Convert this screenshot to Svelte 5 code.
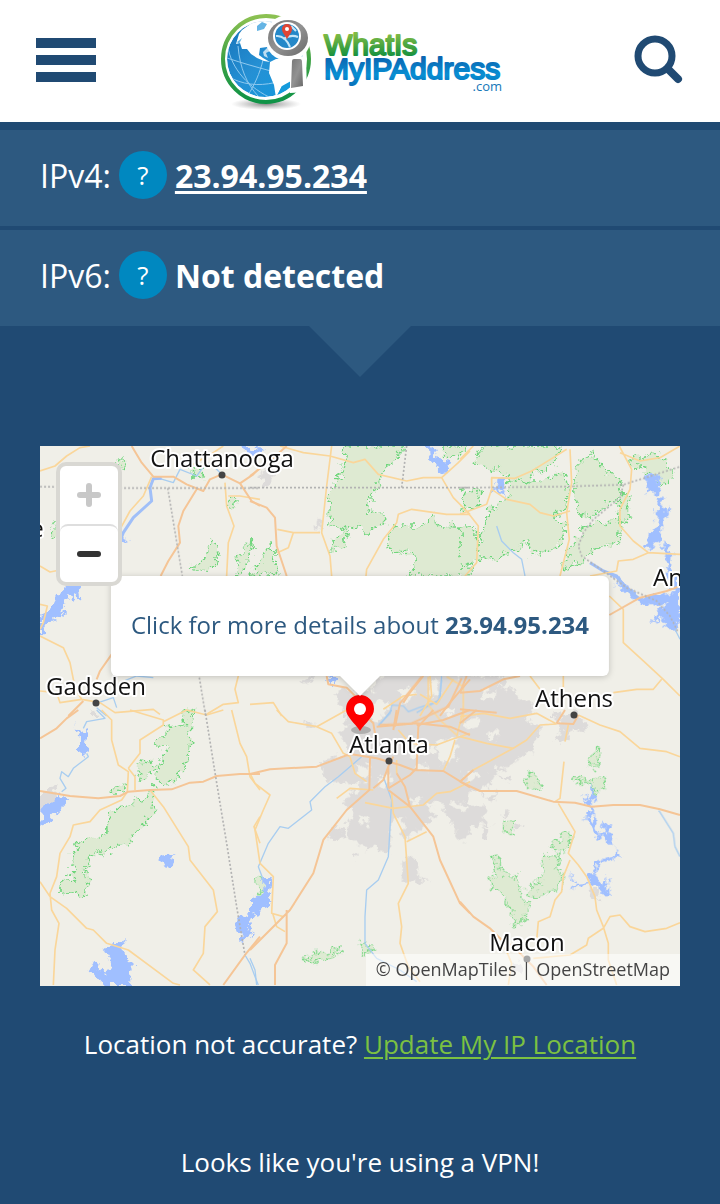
<script>
  // Each tile is drawn in its own units, three to a map pixel.
  const tiles = [
    {
      x: 0, y: 0,
      urban: 'M150 800l20-5 10 15h-30z',
      parks: 'M232 45l20-10 8 30-20 10z M455 60l35 0-5 35-25 5z M560 160l25-10 5 35-25 5z M515 280L535 300 530 345 500 375 460 375 458 355 490 345Z M628 285L640 310 610 370 583 390 600 330Z M50 225l8 0 0 60-20-20z M435 795l25-5 0 20h-25z',
      lakes: 'M98 408L142 408 120 425 124 470 105 440 85 465 60 500 88 490 50 520 20 535 0 568 0 515 30 490 50 450Z M238 272l30 10-22 8-10 8z M610 5l50 5 0 15-40 5z',
      rivers: 'M545 85L520 60 500 50 470 90 420 70 400 110 350 95 M215 745L240 710 290 690 340 695 M175 770l45-15 10 30 M170 785l30 25',
      streams: 'M365 97L340 98 330 125 335 165 280 215 250 260 238 290',
      major: 'M275 0L305 50 340 92 400 92 440 115 490 135 510 100 545 85 600 112 640 85 660 65 M470 130L430 195 415 240 420 290 385 345 362 390 M600 112L635 165 660 180 M215 625L180 675 170 700 M130 765L85 810',
      minor: 'M0 75L45 60 80 30 120 5 150 0 M335 92L310 150 270 195 240 250 M0 360L30 378 60 372 M0 475L22 480 10 530 0 550 M0 570L70 605 90 650 105 725 125 760 60 770 50 740 0 735 M555 110L560 180 582 240 565 290 560 390 M565 150L600 150 660 160 M595 690L585 730 595 770 550 775 500 805 M125 760L180 770 225 800 340 790 360 805 M450 60l70-40 30-20',
      borders: 'M0 122L240 126H660 M383 126L427 390 M478 695L497 810'
    },
    {
      x: 210, y: 0,
      urban: 'M30 85l30-30 10 35-15 35-15-5z M200 225h15v30h-15z M150 700l40-8-20 25z',
      parks: 'M290 0L465 0 440 40 400 70 385 120 360 150 355 195 402 200 400 240 365 245 355 270 330 235 295 250 285 300 245 318 250 280 285 250 240 230 235 140 275 90Z M430 240L520 240 550 210 565 235 620 240 660 270 660 390 470 390 500 350 480 320 425 320 410 295Z M60 300L78 320 80 385 5 390 30 340Z M0 290l10 5-5 30h-5z M640 140l20 0v40h-20z M580 0l70 0-25 35-40-5z',
      lakes: 'M530 0L555 10 560 35 605 45 590 80 560 70 535 40Z M232 690h22l5 20-18 5z M0 5l45 5-30 15H0z',
      rivers: 'M575 690l-5 70-70 40',
      streams: '',
      major: 'M0 165L50 185 75 215 80 300 110 390 M0 90L60 45 M60 45l50-45 M230 690L235 715 290 725 320 755 M660 700L600 770 570 810 M520 690L480 740 460 770',
      minor: 'M90 0L160 20 240 30 310 50 345 40 385 85 470 105 520 95 575 95 625 50 660 15 M245 0L230 120 215 260 240 330 245 390 M82 250L130 260 210 260 M130 260L115 305 82 320 M575 95L610 155 660 205 M660 205L590 205 485 190 445 205 440 230 400 280 350 370 348 390 M0 775L70 770 95 810 M540 690l5 60-35 60 M510 745L560 775 610 700 M400 790L460 750 500 745',
      borders: 'M0 125H660 M470 0L455 125'
    },
    {
      x: 420, y: 0,
      urban: 'M270 800l40-5v15h-40z',
      parks: 'M60 0L300 0 280 55 215 85 200 115 150 95 120 75 45 55Z M340 60L400 20 420 55 480 110 490 140 430 190 400 210 350 200 345 140Z M510 40L600 20 645 95 600 120 555 70 515 60Z M150 105L240 105 300 80 325 100 322 190 280 205 315 240 300 300 215 325 200 290 110 340 60 330 60 270 90 190 140 160Z M10 140l50-5-5 45-45 10z M375 240L480 220 475 290 410 310 360 350 310 370 325 320Z M480 140l30 10-10 90-25-30z M0 240L45 240 55 340 0 370Z',
      lakes: 'M110 100L145 95 135 120 120 130 135 160 115 145 100 130Z M555 85L600 90 590 140 560 140Z M595 150L612 155 605 190 635 185 610 230 600 280 570 310 550 300 575 265 590 220Z M605 285L635 300 630 360 660 400 660 520 645 555 610 535 600 515 575 535 595 495 625 470 560 475 520 460 480 430 450 375 480 395 510 425 540 455 590 445 640 440 615 370 620 315Z',
      rivers: 'M110 240L125 285 160 320 185 340 195 390 M645 550l15 30',
      streams: 'M390 350L430 375 470 390 500 430 540 460',
      major: 'M448 507L540 455 620 435 660 420 M0 740L60 735 130 700 180 690 M0 790l110 10 M20 690L0 740',
      minor: 'M40 0L0 40 M320 10L215 75 165 97 95 95 95 130 140 160 210 175 240 200 280 210 330 195 M330 10L335 110 320 200 328 280 300 390 M478 0L515 70 510 130 480 190 480 240 520 285 565 320 660 325 M480 20L540 45 600 35 660 0 M565 320L520 340 475 345 470 375 390 390 M95 130L80 175 0 205 M20 195L55 240 50 350 15 390 M448 450L490 490 490 590 550 645 610 700 660 750 M605 700L580 730 530 730 460 740 M210 690L240 730 M310 690v40',
      borders: 'M0 125L300 122 490 116 660 62 M490 116L480 155 400 220 370 260 355 300 365 330 430 375 500 425 590 465 630 510 655 560'
    },
    {
      x: 0, y: 264,
      urban: 'M0 245L50 225 45 250 60 275 30 300 0 295Z',
      parks: 'M430 0L460 10 455 40 450 130 432 185 375 230 345 215 360 150 350 180 310 205 290 200 300 150 365 170 380 110 345 105 380 60 430 45Z M212 235l45-15-5 25-35 8z M340 245L340 310 265 395 190 430 150 440 135 480 145 510 130 555 60 550 60 510 105 500 95 430 110 400 200 370 205 310 290 275Z',
      lakes: 'M100 42l20 25 25-10-5 75-20-5 0-40z M55 245L88 272 55 300 35 320 15 350 0 345 5 290 40 280Z M358 440l45-4-10 38-25-5z M660 555L660 595 630 635 615 695 600 685 585 620 620 620Z M225 700L255 690 240 710 270 740 275 780 270 825 190 825 165 790 145 780 160 755 195 795 215 770 200 720Z',
      rivers: 'M170 0L195 25 140 35 130 55 M140 130L145 140 100 175 85 200 65 185 60 205 78 235 65 245 M615 735L630 760 645 800 655 825',
      streams: '',
      major: 'M0 85L50 55 80 25 115 0 M0 243L90 258 175 265 240 258 265 245 330 240 395 238 450 218 490 215 530 198 600 192 660 192 M660 680L615 735 550 825',
      minor: 'M185 0L215 30 215 90 235 165 265 185 262 245 M265 175L285 200 285 240 M265 175L300 130 300 90 370 45 370 30 270 0 M370 35L440 0 500 15 550 0 M262 245L245 270 180 300 150 335 100 345 90 380 60 430 50 500 30 550 35 600 57 640 45 720 40 825 M0 515L30 560 80 595 140 655 160 660 200 700 265 720 400 820 420 825 M330 240L370 290 445 410 450 450 520 540 532 605 495 650 490 730 460 780 510 825 M575 0L600 100 620 140 630 200 660 240 M660 320L642 350 660 400',
      borders: 'M495 0L527 200 560 400 590 590 615 735'
    },
    {
      x: 210, y: 264,
      urban: 'M235 365L270 355 290 385 240 390Z M300 435l25-5-10 18z M460 445L500 450 505 500 535 518 455 515Z M160 35l30 0 10 15-35 0z',
      parks: 'M20 510l30-5-5 40-15 0z M165 755L190 730 230 725 265 710 268 730 220 750Z M332 700l20-5 18 28-35 10z',
      lakes: 'M40 495L65 510 60 540 45 570 75 575 40 590 25 610 0 615 0 570 40 545Z M0 660l5 10-5 10z',
      rivers: 'M425 0L385 50 M335 140L265 200 225 230 180 275 185 300 115 355 90 350 55 400 25 470 40 510 M400 200L425 270 415 440 385 510 350 540 345 620 345 700 380 745 450 780 500 815 M0 745L15 780 20 825',
      streams: '',
      major: 'M0 192L60 178 200 170 300 132 380 145 450 165 490 180 580 183 660 232 M440 0L430 60 M360 145L358 240 290 300 220 390 190 490 120 600 0 720 M110 600L110 700 75 765 75 825 M415 235L415 170 430 140 M415 235L480 195 500 175 505 50 550 0 M415 240L480 290 550 380 570 450 630 580 660 610 M380 50L500 40 600 50 660 75 M480 290L465 230 440 190 M660 0L580 30 500 45 M330 0L370 40 380 100 M370 235L400 210 415 170',
      minor: 'M80 0L115 35 200 50 245 70 280 130 300 140 315 190 350 215 M200 50L290 0 M0 190L15 220 60 255 40 300 15 360 30 460 70 500 65 610 100 620 M68 610L80 650 105 665 M260 265L300 235 370 240 M345 278L430 295 520 285 560 250 600 245 660 215 M425 250L430 310 465 380 475 520 445 580 455 650 450 700 475 770 510 815 M470 395L530 365 M445 60L480 100 560 105 600 90 660 70 M640 0L620 80 M615 90L600 140 580 183 M440 150V190',
      borders: ''
    },
    {
      x: 420, y: 264,
      urban: 'M290 20L340 0 385 45 370 65 340 55 320 100 280 95 305 60Z M110 200l50 0 0 22z M120 318l30-18-10 20z M160 350l25-15 5 10-25 15z M70 345l20 15-10 35-12-5z M385 535l30 10 5 35-30-20z M160 765l25-10v25l-20 5z',
      parks: 'M410 115l12 5-10 50-25 0z M210 190l30 25-5 20-38-10z M340 200L395 212 435 200 440 225 400 248 380 215 345 220Z M135 328l20 5 0 42-20 0z M325 368l12 10-15 40-30 10-22-20z M255 435L305 440 285 475 305 485 300 540 245 555 205 555 205 530 240 520Z M92 440L120 455 130 495 180 500 185 570 205 580 190 640 165 645 150 600 130 555 92 525 105 480Z',
      lakes: 'M385 220L395 245 408 245 398 275 400 330 420 375 435 375 425 330 450 345 445 375 467 385 460 415 440 390 405 380 385 325 365 320 388 318 388 288 365 255 390 275Z M465 415L475 430 490 433 470 440 430 460 412 470 410 500 430 530 440 500 450 550 420 545 390 520 345 535 335 540 345 525 322 488 350 520 385 515 385 490 405 490 405 460 465 435Z',
      rivers: 'M597 302L640 370 645 410 660 440',
      streams: '',
      major: 'M0 215L60 243 170 243 280 275 345 278 395 290 460 285 540 285 600 298 660 315 M0 575L40 620 90 655 125 690 160 710 220 770 260 825 M0 40L50 0 M0 215L40 180 M290 40L340 42 355 15 M290 40L315 0 M130 690L160 710',
      minor: 'M0 20L70 10 150 25 230 10 290 42 M290 42L240 45 200 90 160 115 80 100 0 80 M160 115L40 180 0 215 M325 45L315 95 M312 155L300 265 285 275 M295 280L345 365 325 430 355 465 380 500 405 560 410 600 430 650 445 700 445 750 470 825 M330 450L310 500 305 545 285 570 270 620 235 635 230 690 M355 15L420 45 480 65 540 115 620 125 660 140 M430 655L450 620 480 615 510 650 555 665 620 655 660 638 M430 655L385 685 380 705 330 735 220 745 M130 700l25 60-10 65',
      borders: ''
    },
    {
      // The Atlanta metro area, with its open ground cut out
      x: 280, y: 224,
      urban: 'M180 20L220 10 330 10 560 20 540 50 580 60 600 90 640 110 620 150 660 175 640 240 590 270 570 290 520 300 525 330 500 345 440 370 440 400 500 405 490 440 515 470 480 460 440 490 425 515 410 505 400 460 380 440 365 400 325 405 345 440 310 470 255 515 245 450 215 440 210 540 185 555 165 525 140 550 130 520 85 510 80 460 100 430 70 400 80 380 120 355 110 340 30 335 10 320 10 270 60 260 90 245 65 200 80 130 40 75 70 50 100 70 160 60Z M350 218L412 202 402 260 370 292 355 255Z M268 222l30 0 50 8-5 20-60 10z M110 290l40-5 0 40-20 12z M180 310l35 0-5 34-35 8z M440 150l45-5 0 20-45 10z M230 60l45-15 15 30-40 25z M430 315l45-15 15 15-50 20z M140 90l50 0 15 30-35 40-25-20z M490 60l40 10-5 20-35-5z M330 40l25-5 5 40-30 5z M505 185l25 0 0 18-25 0z M290 285l35 0-5 20-30-4z M270 380l35 5-5 18-25 0z M360 120l40-5 0 18-35 5z M120 440l30 5-5 18-25-4z M390 400l30-10 20 30-25 10z M25 480l30-8 25 30-35 10z M490 380l45-18-15 32z',
      parks: '', lakes: '', rivers: 'M175 165L210 130 215 105 250 108 265 125 300 112 355 95 365 30',
      streams: '',
      major: 'M225 170L240 100 305 20 M425 25L385 110 275 160 180 165',
      minor: 'M325 20L325 105 360 150 410 195 M380 20L430 50 430 160',
      borders: ''
    }
  ];

  const layers = ['urban', 'parks', 'lakes', 'rivers', 'streams', 'minor', 'major', 'borders'];

  const cities = [
    { name: 'Chattanooga', x: 182, y: 21, dot: 29 },
    { name: 'Gadsden', x: 56, y: 249, dot: 257 },
    { name: 'Athens', x: 534, y: 261, dot: 269 },
    { name: 'Atlanta', x: 349, y: 307, dot: 315 },
    { name: 'Macon', x: 487, y: 505, dot: 513 },
    { name: 'An', x: 628, y: 140 },
    { name: 'e', x: -3, y: 91 }
  ];

  const ip = '23.94.95.234';
</script>

<header>
  <button class="menu" aria-label="Menu"><span></span><span></span><span></span></button>
  <a class="logo" href="#home" aria-label="WhatIsMyIPAddress.com">
    <svg width="292" height="104" viewBox="218 6 292 104">
      <defs>
        <linearGradient id="ring" x2="0" y2="1"><stop offset="0" stop-color="#8cc152" /><stop offset=".5" stop-color="#3fa244" /><stop offset="1" stop-color="#0f9347" /></linearGradient>
        <linearGradient id="sea" x2="1" y2="1"><stop offset="0" stop-color="#1672b8" /><stop offset=".5" stop-color="#2590d4" /><stop offset="1" stop-color="#109be0" /></linearGradient>
        <linearGradient id="steel" x2="1" y2="1"><stop offset="0" stop-color="#777" /><stop offset=".5" stop-color="#929292" /><stop offset="1" stop-color="#686868" /></linearGradient>
        <linearGradient id="green" gradientUnits="userSpaceOnUse" x1="0" x2="0" y1="32" y2="54"><stop offset="0" stop-color="#80bb45" /><stop offset="1" stop-color="#16913f" /></linearGradient>
        <linearGradient id="blue" gradientUnits="userSpaceOnUse" x1="0" x2="0" y1="56" y2="84"><stop offset="0" stop-color="#0b66b2" /><stop offset=".6" stop-color="#088fd3" /><stop offset="1" stop-color="#0870b9" /></linearGradient>
        <radialGradient id="shade"><stop offset="0" stop-color="#555" stop-opacity=".7" /><stop offset="1" stop-color="#888" stop-opacity="0" /></radialGradient>
        <clipPath id="globe"><circle cx="264" cy="57" r="38" /></clipPath>
      </defs>
      <ellipse cx="265" cy="102" rx="35" ry="6" fill="url(#shade)" />
      <circle cx="265" cy="57" r="43" fill="#fff" stroke="url(#ring)" stroke-width="4" />
      <g clip-path="url(#globe)">
        <circle cx="264" cy="57" r="38" fill="url(#sea)" />
        <path d="M226 39C228 63 244 83 268 95 M237 44C239 67 246 82 257 94 M262 58C259 71 253 84 247 93 M226 56C241 61 255 65 270 69 M232 77C247 84 263 84 280 79" fill="none" stroke="#8fc9ef" stroke-width="1" />
        <path d="M238 32L241 28 248 23 243 20 255 17 268 17 272 24 269 38 266 45 259 46 258 53 262 56 269 60 263 59 256 56 250 52 246 47 241 47 239 41 235 42Z" fill="#fff" />
        <path d="M256 24l5-4 5 2-3 5-7 2z M236 40l5-4-3 6z" fill="#65b4e4" />
        <path d="M262 50l5-5 2 4-4 2 2 5-4-2z" fill="#fff" opacity=".7" />
        <path d="M269 60L275 57 288 57 308 56 306 90 297 87 281 84 275 96 273 83 268 71Z" fill="#fff" />
        <path d="M281 84L290 79 290 88 300 88 286 98 274 97Z" fill="#159bdc" />
      </g>
      <circle cx="287" cy="36" r="23" fill="#fff" />
      <path d="M289 55l16-1 1 36-17 1z" fill="#fff" />
      <path d="M291 59Q291 57 293 57L299 57Q301 57 301 60L302 84 290 86Z" fill="url(#steel)" />
      <ellipse cx="287" cy="36" rx="20" ry="18" fill="url(#steel)" />
      <circle cx="286" cy="34" r="14" fill="#fff" />
      <circle cx="286" cy="34" r="12" fill="#2588c8" />
      <path d="M275 34Q284 33 289 45 M282 37Q290 32 297 35 M290 24l5 5" fill="none" stroke="#c7e7f8" stroke-width="2" />
      <path d="M286 37C283 32 281 30 281 27A5 5 0 0 1 291 27C291 30 289 32 286 37Z" fill="#e04535" />
      <circle cx="286" cy="27" r="2" fill="#fff" />
      <g class="word">
        <text x="323" y="53" fill="url(#green)" stroke="url(#green)">WhatIs</text>
        <text x="323" y="77" fill="url(#blue)" stroke="url(#blue)">MyIPAddress</text>
      </g>
      <text class="com" x="501" y="89" text-anchor="end">.com</text>
    </svg>
  </a>
  <button class="search" aria-label="Search">
    <svg width="50" height="50" viewBox="0 0 50 50" fill="none" stroke="#204a73">
      <circle cx="21" cy="21" r="17" stroke-width="7" /><path d="M34 34L44 44" stroke-width="8" stroke-linecap="round" />
    </svg>
  </button>
</header>

<main>
  <section class="ips">
    <div class="ip"><span class="version">IPv4:</span><button class="help" aria-label="About IPv4">?</button><a href="#ip">{ip}</a></div>
    <div class="ip"><span class="version">IPv6:</span><button class="help" aria-label="About IPv6">?</button><strong>Not detected</strong></div>
  </section>

  <section class="map" aria-label="Map">
    <svg class="canvas" viewBox="0 0 640 540" preserveAspectRatio="xMidYMid slice">
      <defs>
        <filter id="rough" x="0" y="0" width="640" height="540" filterUnits="userSpaceOnUse"><feTurbulence type="fractalNoise" baseFrequency=".13" numOctaves="3" seed="4" /><feDisplacementMap in="SourceGraphic" scale="14" xChannelSelector="R" yChannelSelector="G" /></filter>
      </defs>
      {#each layers as layer}
        <g class={layer}>
          {#each tiles as tile}
            <path transform="translate({tile.x} {tile.y}) scale(.3333)" d={tile[layer]} />
          {/each}
        </g>
      {/each}
      {#each cities as city}
        {#if city.dot}<circle cx={city.x} cy={city.dot} r="3.5" fill="#444" />{/if}
        <text class="city" x={city.x} y={city.y}>{city.name}</text>
      {/each}
      <ellipse cx="321" cy="284" rx="10" ry="4" fill="#000" opacity=".2" />
      <path d="M320 285C315 277 306 271 306 263A14 14 0 0 1 334 263C334 271 325 277 320 285Z" fill="#f00" />
      <circle cx="320" cy="263" r="6" fill="#fff" />
    </svg>
    <a class="popup" href="#details">Click for more details about <b>{ip}</b></a>
    <div class="zoom"><button disabled aria-label="Zoom in"><i></i><i class="upright"></i></button><button aria-label="Zoom out"><i></i></button></div>
    <div class="credit"><a href="#tiles">© OpenMapTiles</a><span>|</span><a href="#osm">OpenStreetMap</a></div>
  </section>

  <p class="update">Location not accurate? <a href="#update">Update My IP Location</a></p>
  <p class="vpn">Looks like you're using a VPN!</p>
</main>

<style>
  :global(body) { margin: 0; background: #204a73; }
  header, main { font-family: "Open Sans", "Noto Sans", sans-serif; }
  button { border: 0; padding: 0; background: none; font: inherit; cursor: pointer; }
  a { color: inherit; }
  header { display: flex; justify-content: space-between; align-items: center; height: 122px; padding: 0 36px 2px; box-sizing: border-box; background: #fff; }
  .menu { display: flex; flex-direction: column; gap: 7px; width: 60px; }
  .menu span { height: 10px; background: #204a73; }
  .logo, .search { display: flex; }
  .word { font: 30px "Liberation Sans", Arial, sans-serif; stroke-width: 2px; stroke-linejoin: round; }
  .com { font: 13px "Open Sans", sans-serif; fill: #1577b8; }
  main { color: #fff; }
  .ips { position: relative; display: grid; gap: 4px; padding-top: 8px; margin-bottom: 120px; }
  .ips::after { content: ""; position: absolute; top: 100%; left: 50%; width: 102px; height: 51px; transform: translateX(-50%); background: #2d5980; clip-path: polygon(0 0, 100% 0, 50% 100%); }
  .ip { display: flex; align-items: center; height: 96px; padding: 0 40px 6px; box-sizing: border-box; background: #2d5980; font-size: 32px; }
  .help { width: 48px; height: 48px; margin: 0 8px; border-radius: 50%; background: #0088c0; color: #fff; font-size: 26px; }
  .ip a, strong { font-weight: 700; }
  .ip a { text-decoration-thickness: 3px; text-underline-offset: 3px; }
  .map { position: relative; margin: 0 40px; aspect-ratio: 32 / 27; overflow: hidden; background: #f0efe8; }
  .canvas { display: block; width: 100%; height: 100%; }
  .canvas path { stroke-linejoin: round; }
  .urban, .parks, .lakes { filter: url(#rough); }
  .rivers, .streams, .minor, .major { fill: none; }
  .urban { fill: #dddbda; fill-rule: evenodd; }
  .parks { fill: #deead2; stroke: #6fd67c; stroke-width: 5px; stroke-dasharray: 8 6; }
  .lakes { fill: #a0bfff; }
  .rivers { stroke: #a8cdf0; stroke-width: 4px; }
  .streams { stroke: #a0bff8; stroke-width: 9px; }
  .minor { stroke: #fad69a; stroke-width: 5px; }
  .major { stroke: #f5c596; stroke-width: 6px; }
  .borders { fill: none; stroke: #b3b3b3; stroke-width: 5px; stroke-dasharray: 6 6; }
  .city { font: 24px "Open Sans", sans-serif; text-anchor: middle; fill: #111; stroke: #fff; stroke-width: 4px; stroke-linejoin: round; paint-order: stroke; }
  .zoom { position: absolute; top: 16px; left: 16px; width: 58px; border: 4px solid #d9d8d3; border-radius: 10px; overflow: hidden; background: #fff; }
  .zoom button { position: relative; display: grid; place-items: center; width: 100%; height: 58px; color: #333; }
  .zoom button:disabled { color: #c8c8c8; }
  .zoom button + button { border-top: 2px solid #dedede; border-radius: 8px 8px 0 0; }
  .zoom i { grid-area: 1 / 1; width: 24px; height: 6px; border-radius: 3px; background: currentColor; }
  .zoom .upright { transform: rotate(90deg); }
  .popup { position: absolute; top: 130px; left: 50%; transform: translateX(-50%); padding: 0 20px 2px; border-radius: 6px; background: #fff; color: #2d5980; font-size: 24px; line-height: 98px; white-space: nowrap; text-decoration: none; filter: drop-shadow(0 1px 3px #0003); }
  .popup::after { content: ""; position: absolute; top: 100%; left: 50%; width: 40px; height: 20px; transform: translateX(-50%); background: #fff; clip-path: polygon(0 0, 100% 0, 50% 100%); }
  .credit { position: absolute; right: 0; bottom: 0; display: flex; gap: 5px; padding: 0 10px 2px; background: #ffffff88; color: #444; font-size: 18px; line-height: 30px; }
  .credit a { text-decoration: none; }
  p { margin: 0; text-align: center; font-size: 26px; line-height: 34px; }
  .update { padding-top: 41px; }
  .update a { color: #7cc142; text-decoration-thickness: 2px; text-underline-offset: 3px; }
  .vpn { padding: 84px 0 24px; }
</style>
